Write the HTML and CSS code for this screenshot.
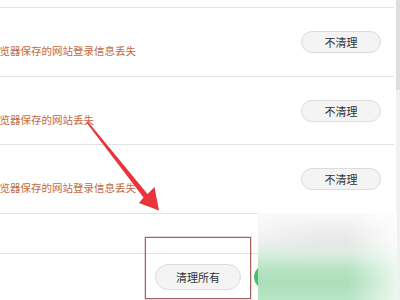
FILE: index.html
```html
<!DOCTYPE html>
<html>
<head>
<meta charset="utf-8">
<link rel="stylesheet" href="styles.css">
</head>
<body>
<div class="page">
  <div class="content">
    <div class="row">
      <div class="info"><span class="desc">浏览器保存的网站登录信息丢失</span></div>
      <button class="btn">不清理</button>
    </div>
    <div class="row">
      <div class="info"><span class="desc">浏览器保存的网站丢失</span></div>
      <button class="btn">不清理</button>
    </div>
    <div class="row">
      <div class="info"><span class="desc">浏览器保存的网站登录信息丢失</span></div>
      <button class="btn">不清理</button>
    </div>
    <div class="spacer"></div>
    <div class="footer">
      <button class="btn btn-all">清理所有</button>
      <button class="btn btn-green">清理</button>
    </div>
  </div>
  <div class="scrollbar"><div class="thumb"></div></div>
  <div class="highlight"></div>
  <div class="blur"></div>
  <svg class="arrow" width="400" height="300" viewBox="0 0 400 300">
    <polygon points="86.4,122.5 87.8,121.4 147.5,194 154.5,187 159,210.5 139,203 143.5,197.5" fill="#e8343a"/>
  </svg>
</div>
</body>
</html>
```
FILE: styles.css
```css
html, body {
  margin: 0;
  padding: 0;
  background: #ffffff;
  overflow: hidden;
}
.page {
  position: relative;
  width: 400px;
  height: 300px;
  overflow: hidden;
  display: flex;
  font-family: "Noto Sans CJK SC", "Noto Sans", sans-serif;
}
.content {
  width: 394px;
  padding-top: 7px;
  display: flex;
  flex-direction: column;
}
.row {
  height: 67.5px;
  border-top: 1px solid #e3e3e3;
  display: flex;
  justify-content: space-between;
  align-items: flex-start;
  padding-right: 13px;
  box-sizing: content-box;
}
.info {
  padding-top: 36px;
  overflow: hidden;
}
.desc {
  display: block;
  margin-left: -11px;
  font-size: 10.5px;
  line-height: 14px;
  color: #c4693f;
  white-space: nowrap;
}
.btn {
  margin-top: 23px;
  width: 80px;
  height: 22px;
  border: 1px solid #dcdcdc;
  border-radius: 11px;
  background: #f4f4f4;
  color: #333333;
  font-family: "Noto Sans CJK SC", "Noto Sans", sans-serif;
  font-size: 11px;
  line-height: 20px;
  padding: 0;
}
.spacer {
  height: 39px;
  border-top: 1px solid #e3e3e3;
}
.footer {
  border-top: 1px solid #e3e3e3;
  display: flex;
  gap: 13px;
  padding-left: 155px;
}
.btn-all {
  margin-top: 10px;
  width: 86px;
  height: 26px;
  border-radius: 13px;
  line-height: 24px;
}
.btn-green {
  margin-top: 10px;
  width: 86px;
  height: 26px;
  border-radius: 13px;
  background: #45c267;
  border-color: #45c267;
  color: #ffffff;
}
.scrollbar {
  width: 4px;
  margin-left: 2px;
  background: #f1f1f1;
}
.thumb {
  height: 90px;
  background: #dedede;
}
.highlight {
  position: absolute;
  left: 145px;
  top: 237px;
  width: 104px;
  height: 60px;
  border: 1px solid #a4625f;
  box-shadow: 0 0 0 0.5px rgba(164, 98, 95, 0.5);
}
.blur {
  position: absolute;
  left: 258px;
  top: 213px;
  width: 139px;
  height: 87px;
  background:
    linear-gradient(to right, rgba(255, 255, 255, 0) 65%, rgba(255, 255, 255, 0.75) 100%),
    radial-gradient(ellipse 60% 30% at 55% 32%, rgba(225, 228, 226, 0.7), rgba(240, 242, 240, 0) 100%),
    linear-gradient(#f9f9f9 0%, #f2f3f2 30%, #d6eedc 48%, #b6e3c3 65%, #addfbb 80%, #b8e5c6 100%);
}
.arrow {
  position: absolute;
  left: 0;
  top: 0;
}
```
